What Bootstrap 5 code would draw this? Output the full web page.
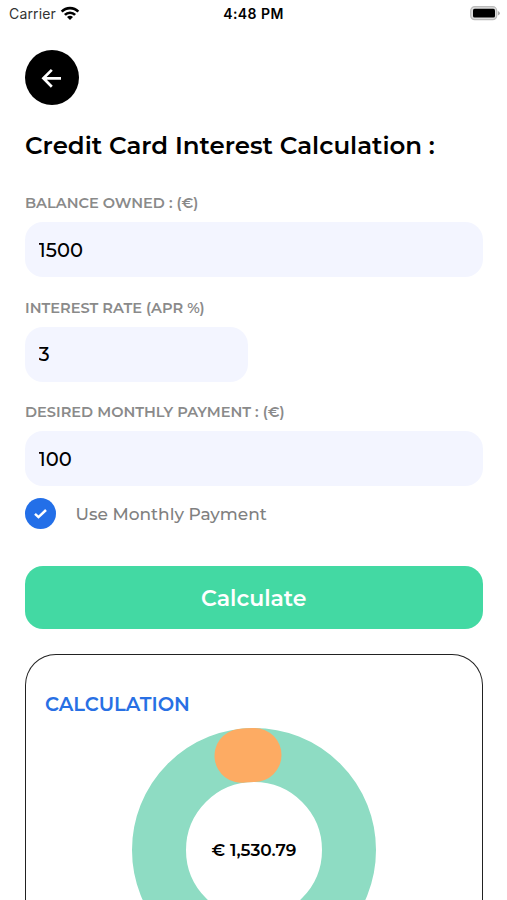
<!DOCTYPE html>
<html lang="en">
<head>
<meta charset="utf-8">
<meta name="viewport" content="width=device-width, initial-scale=1">
<title>Credit Card Interest Calculation</title>
<link href="https://cdn.jsdelivr.net/npm/bootstrap@5.3.0/dist/css/bootstrap.min.css" rel="stylesheet">
<style>
  body { font-family: Montserrat, Inter, sans-serif; color: #000; height: 900px; overflow: hidden; background: #fff; }
  .status-bar { height: 27px; font-family: Inter, sans-serif; font-size: 14px; padding: 0 7px 0 9px; }
  .status-bar .carrier { color: #333; letter-spacing: .15px; }
  .status-bar .clock { font-weight: 600; letter-spacing: .45px; margin-right: 2px; }
  .screen { height: 873px; padding: 23px 24.5px 0 25px; overflow: hidden; }
  .back-btn, .back-btn:hover { width: 54px; height: 55px; background: #000; }
  .page-title { font-size: 24.5px; font-weight: 600; line-height: 30px; margin: 25px 0 34px; white-space: nowrap; }
  .field-group { margin-bottom: 21.7px; }
  .field-label { display: block; font-size: 14.6px; font-weight: 600; line-height: 18px; margin-bottom: 10px; color: #8a8a8a; white-space: nowrap; }
  .field-input, .field-input:focus { height: 55px; border: 0; border-radius: 18px; background: #f3f5ff; color: #000; font-size: 19.5px; font-weight: 500; padding: 0 13.5px; box-shadow: none; }
  .rate-input { width: 223px; }
  .use-monthly { margin-top: -9.7px; margin-bottom: 36.7px; }
  .check-dot { width: 31px; height: 31px; background: #236fe8; }
  .check-text { font-size: 17px; font-weight: 500; color: #808080; padding-top: 2px; margin-left: 19.5px; }
  .calc-btn, .calc-btn:hover { height: 63px; border: 0; border-radius: 18px; background: #43d9a3; color: #fff; font-size: 22px; font-weight: 600; padding: 2px 0 0; }
  .result-card { height: 246px; margin-top: 25px; border: 1.4px solid #222; border-bottom: 0; border-radius: 31px 31px 0 0; padding: 37px 19px 0; overflow: hidden; }
  .result-title { font-size: 19.5px; font-weight: 600; line-height: 24px; color: #2870e4; margin: 0 0 12px; }
  .total { font-size: 17px; font-weight: 600; }
</style>
<script src="https://cdn.jsdelivr.net/npm/bootstrap@5.3.0/dist/js/bootstrap.bundle.min.js"></script>
</head>
<body>
<header class="status-bar row g-0 align-items-center">
  <div class="col d-flex align-items-center gap-1">
    <span class="carrier">Carrier</span>
    <svg width="20" height="16" viewBox="0 0 20 16" fill="none" stroke="#000" stroke-width="2.6">
      <path d="M1.7 5.700a11.4 11.4 0 0 1 16.6 0"/><path d="M4.9 8.900a7 7 0 0 1 10.2 0"/>
      <path d="M10 14.100 7 11.100a4.3 4.3 0 0 1 6 0z" fill="#000" stroke="none"/>
    </svg>
  </div>
  <div class="col-auto clock">4:48 PM</div>
  <div class="col d-flex justify-content-end">
    <svg width="30" height="15" viewBox="0 0 30 15">
      <rect x=".7" y=".7" width="26" height="13" rx="4" fill="#ddd" stroke="#bbb" stroke-width="1.2"/>
      <rect x="3" y="2.8" width="22" height="8.8" rx="1.6"/><path d="M27.9 5q2 .8 2 2.2t-2 2.2z" fill="#aaa"/>
    </svg>
  </div>
</header>
<main class="screen">
  <button class="back-btn btn rounded-circle p-0 d-flex align-items-center justify-content-center" type="button" aria-label="Back">
    <svg width="22" height="20" viewBox="0 0 22 20" fill="none" stroke="#fff" stroke-width="2.7"><path d="M20 10.3H3M10.800 1.900 2.400 10.300l8.400 8.400"/></svg>
  </button>
  <h1 class="page-title">Credit Card Interest Calculation :</h1>
  <form>
    <div class="field-group">
      <label class="field-label" for="balance">BALANCE OWNED : (€)</label>
      <input id="balance" class="field-input form-control" value="1500">
    </div>
    <div class="field-group">
      <label class="field-label" for="rate">INTEREST RATE (APR %)</label>
      <input id="rate" class="field-input rate-input form-control" value="3">
    </div>
    <div class="field-group">
      <label class="field-label" for="payment">DESIRED MONTHLY PAYMENT : (€)</label>
      <input id="payment" class="field-input form-control" value="100">
    </div>
    <div class="use-monthly d-flex align-items-center">
      <span class="check-dot rounded-circle d-flex align-items-center justify-content-center">
        <svg width="13" height="11" viewBox="0 0 13 11" fill="none" stroke="#fff" stroke-width="2.5"><path d="m1 5.800 3.500 3.300L12 2"/></svg>
      </span>
      <span class="check-text">Use Monthly Payment</span>
    </div>
    <button class="calc-btn btn w-100" type="button">Calculate</button>
  </form>
  <section class="result-card">
    <h2 class="result-title">CALCULATION</h2>
    <svg class="d-block mx-auto" width="244" height="244" viewBox="0 0 244 244" fill="none" stroke-width="54">
      <circle cx="122" cy="122" r="95" stroke="#8edcc3"/>
      <path d="M122.500 27A95 95 0 0 0 109.500 27.800" stroke="#fdab63" stroke-linecap="round"/>
      <text class="total" x="122" y="128" text-anchor="middle" fill="#000" stroke="none">€ 1,530.79</text>
    </svg>
  </section>
</main>
</body>
</html>
